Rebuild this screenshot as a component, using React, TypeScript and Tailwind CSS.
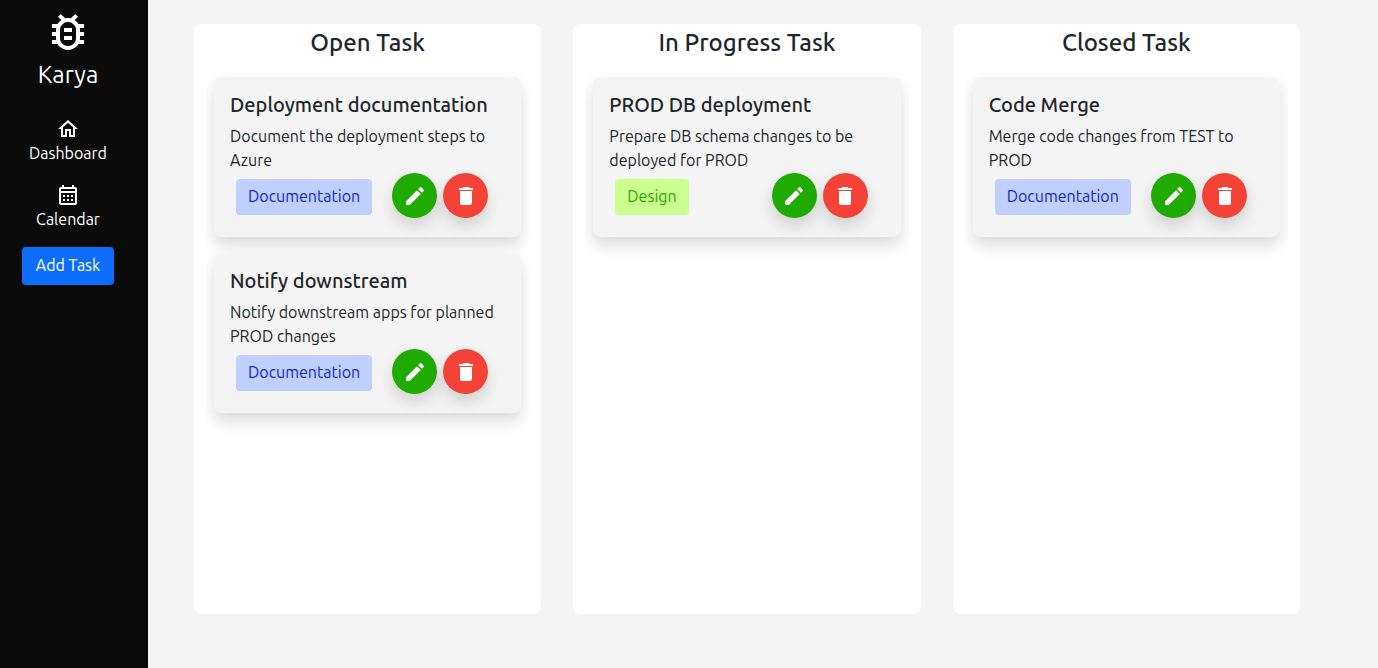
import type { ReactNode } from "react";
import {
  MdDelete,
  MdEdit,
  MdOutlineBugReport,
  MdOutlineCalendarMonth,
  MdOutlineHome,
} from "react-icons/md";

type Tag = "Documentation" | "Design";
type Task = { title: string; description: string; tag: Tag };
type Column = { title: string; tasks: Task[] };

const columns: Column[] = [
  {
    title: "Open Task",
    tasks: [
      {
        title: "Deployment documentation",
        description: "Document the deployment steps to Azure",
        tag: "Documentation",
      },
      {
        title: "Notify downstream",
        description: "Notify downstream apps for planned PROD changes",
        tag: "Documentation",
      },
    ],
  },
  {
    title: "In Progress Task",
    tasks: [
      {
        title: "PROD DB deployment",
        description: "Prepare DB schema changes to be deployed for PROD",
        tag: "Design",
      },
    ],
  },
  {
    title: "Closed Task",
    tasks: [
      {
        title: "Code Merge",
        description: "Merge code changes from TEST to PROD",
        tag: "Documentation",
      },
    ],
  },
];

const tagStyles: Record<Tag, string> = {
  Documentation: "bg-[#c1cfff] text-[#0927cf]",
  Design: "bg-[#cbff8f] text-[#1fab00]",
};

function NavLink({ icon, label }: { icon: ReactNode; label: string }) {
  return (
    <a href="#" className="flex flex-col items-center text-white">
      {icon}
      <span>{label}</span>
    </a>
  );
}

function Sidebar() {
  return (
    <aside className="flex w-[148px] shrink-0 flex-col items-center bg-[#0b0b0b] pt-2 pr-3 text-white">
      <MdOutlineBugReport size={48} />
      <div className="mt-1 text-2xl leading-[30px]">Karya</div>
      <nav className="mt-[27px] flex flex-col items-center gap-[18px]">
        <NavLink icon={<MdOutlineHome size={24} />} label="Dashboard" />
        <NavLink icon={<MdOutlineCalendarMonth size={24} />} label="Calendar" />
      </nav>
      <button
        type="button"
        className="mt-4 h-[38px] rounded bg-[#0d6efd] px-3.5 pb-0.5 whitespace-nowrap"
      >
        Add Task
      </button>
    </aside>
  );
}

function TaskCard({ task }: { task: Task }) {
  return (
    <article className="rounded-lg bg-[#f4f4f4] px-4 pt-4 pb-[19px] shadow-[0_8px_16px_rgba(0,0,0,0.15)]">
      <h3 className="mb-[7px] text-xl leading-6 font-medium">{task.title}</h3>
      <p className="mb-px">{task.description}</p>
      <div className="flex items-center gap-1.5 pr-[17px] pl-1.5">
        <span className={`mt-[3px] mr-auto rounded px-3 pt-[5px] pb-[7px] ${tagStyles[task.tag]}`}>
          {task.tag}
        </span>
        <button
          type="button"
          aria-label={`Edit ${task.title}`}
          className="flex size-[45px] shrink-0 items-center justify-center rounded-full bg-[#1fab00] text-white shadow-[0_8px_16px_rgba(0,0,0,0.15)]"
        >
          <MdEdit size={24} />
        </button>
        <button
          type="button"
          aria-label={`Delete ${task.title}`}
          className="flex size-[45px] shrink-0 items-center justify-center rounded-full bg-[#f44336] text-white shadow-[0_8px_16px_rgba(0,0,0,0.15)]"
        >
          <MdDelete size={24} />
        </button>
      </div>
    </article>
  );
}

export default function App() {
  return (
    <div className="flex min-h-screen bg-[#f4f4f4] font-[Ubuntu,'Noto_Sans',sans-serif] text-base text-[#212529]">
      <Sidebar />
      <main className="grid flex-1 grid-cols-3 gap-8 pt-6 pr-[78px] pb-[54px] pl-[46px]">
        {columns.map((column) => (
          <section key={column.title} className="flex flex-col rounded-lg bg-white px-3">
            <h2 className="pt-1 text-center text-2xl leading-[29px] font-medium">{column.title}</h2>
            <div className="flex flex-1 flex-col gap-4 overflow-hidden px-2 pt-5">
              {column.tasks.map((task) => (
                <TaskCard key={task.title} task={task} />
              ))}
            </div>
          </section>
        ))}
      </main>
    </div>
  );
}
